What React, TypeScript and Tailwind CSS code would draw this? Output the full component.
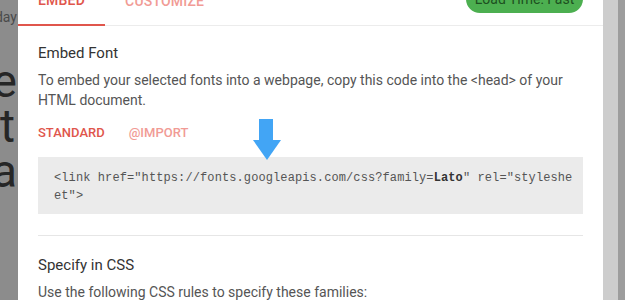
import React from 'react';

const ArrowDown: React.FC = () => (
  <svg width="28" height="41" viewBox="0 0 28 41" className="absolute left-[253px] top-[119px]">
    <rect x="6" y="0" width="14" height="22" fill="#42a5f5" />
    <polygon points="0,21 28,21 14,41" fill="#42a5f5" />
  </svg>
);

export default function App() {
  return (
    <div className="relative w-[625px] h-[300px] flex overflow-hidden bg-white font-['Roboto',sans-serif]">
      {/* dimmed page behind the dialog */}
      <div className="w-[18px] shrink-0 bg-[#8c8c8c] overflow-hidden flex flex-col items-end pr-[1px] pt-[7px] whitespace-nowrap">
        <span className="text-[14px] leading-[20px] text-[#4a4a4a]">Today</span>
        <span className="mt-[32px] text-[46px] leading-[45px] text-[#262626]">e</span>
        <span className="text-[46px] leading-[45px] text-[#262626] pr-[2px]">t</span>
        <span className="text-[46px] leading-[45px] text-[#262626]">a</span>
      </div>

      {/* dialog panel */}
      <div className="w-[585px] shrink-0 bg-white">
        <div className="flex items-center h-[49px] mt-[-23px] border-b border-[#ececec] pr-5">
          <div className="h-full flex items-center px-5 border-b-2 border-[#e0564c] mb-[-1px] text-[14px] font-medium text-[#e0564c] tracking-[0.2px]">
            EMBED
          </div>
          <div className="h-full flex items-center px-5 text-[14px] font-medium text-[#f19b95] tracking-[0.2px]">
            CUSTOMIZE
          </div>
          <div className="ml-auto mt-[-4px] w-[117px] h-[28px] rounded-full bg-[#4caf50] flex items-center justify-center text-[14px] text-[#1d4f20]">
            Load Time: Fast
          </div>
        </div>

        <div className="px-5 pt-[17px]">
          <div className="text-[15px] leading-[20px] text-[#333]">Embed Font</div>
          <p className="mt-[7px] text-[14px] leading-[20px] text-[#555]">
            To embed your selected fonts into a webpage, copy this code into the &lt;head&gt; of your HTML document.
          </p>
          <div className="mt-[13px] flex gap-[24px] text-[13px] leading-[20px] font-medium">
            <span className="text-[#e0564c]">STANDARD</span>
            <span className="text-[#f19b95]">@IMPORT</span>
          </div>
          <div className="mt-[14px] bg-[#ebebeb] pl-4 pr-[9px] pt-3 pb-[9px] font-['Liberation_Mono',monospace] text-[12px] leading-[18px] tracking-[0.1px] text-[#555] break-all">
            &lt;link href="https://fonts.googleapis.com/css?family=<b className="text-[#333]">Lato</b>" rel="stylesheet"&gt;
          </div>
          <div className="mt-[21px] h-px bg-[#e6e6e6]" />
          <div className="mt-[19px] text-[15px] leading-[20px] text-[#333]">Specify in CSS</div>
          <p className="mt-[7px] text-[14px] leading-[20px] text-[#555]">
            Use the following CSS rules to specify these families:
          </p>
        </div>
      </div>

      {/* scrollbar */}
      <div className="w-[15px] shrink-0 bg-[#cdcdcd]" />
      <div className="flex-1 bg-[#9d9d9d]" />

      <ArrowDown />
    </div>
  );
}
